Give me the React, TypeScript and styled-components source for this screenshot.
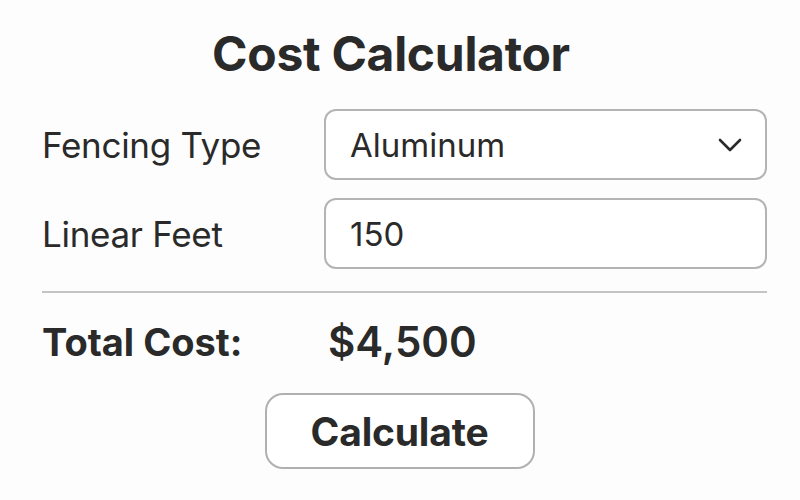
import styled, { createGlobalStyle } from 'styled-components';

const GlobalStyle = createGlobalStyle`
  html, body {
    margin: 0;
    padding: 0;
    background: #fdfdfd;
    font-family: Inter, "Liberation Sans", sans-serif;
    color: #2a2a2a;
  }
`;

const Container = styled.div`
  width: 725px;
  margin-left: 42px;
  padding-top: 26px;
  display: flex;
  flex-direction: column;
`;

const Title = styled.h1`
  margin: 0 0 27px;
  padding-right: 27px;
  text-align: center;
  font-size: 48px;
  font-weight: 700;
  line-height: 56px;
  letter-spacing: -0.3px;
`;

const Row = styled.div`
  display: grid;
  grid-template-columns: 282px 1fr;
  align-items: center;
  margin-bottom: 18px;
`;

const Label = styled.label`
  font-size: 35px;
  font-weight: 400;
  letter-spacing: -0.3px;
`;

const Field = styled.div`
  height: 71px;
  box-sizing: border-box;
  border: 2px solid #b4b4b4;
  border-radius: 12px;
  background: #fff;
  display: flex;
  align-items: center;
  padding: 0 24px;
  font-size: 33px;
`;

const Chevron = styled.svg`
  margin-left: auto;
  margin-right: -2px;
  width: 26px;
  height: 16px;
`;

const Divider = styled.hr`
  margin: 4px 0 0;
  border: none;
  border-top: 2px solid #c4c4c4;
`;

const TotalRow = styled.div`
  display: grid;
  grid-template-columns: 286px 1fr;
  align-items: center;
  margin-top: 23px;
  font-size: 38px;
  font-weight: 700;
`;

const Amount = styled.span`
  font-size: 42px;
  font-weight: 600;
`;

const Button = styled.button`
  align-self: center;
  margin: 26px 10px 0 0;
  width: 270px;
  height: 76px;
  box-sizing: border-box;
  border: 2px solid #b0b0b0;
  border-radius: 18px;
  background: #fff;
  font-family: inherit;
  color: #2a2a2a;
  font-size: 39px;
  font-weight: 700;
  letter-spacing: -0.2px;
  cursor: pointer;
`;

export default function App() {
  return (
    <>
      <GlobalStyle />
      <Container>
        <Title>Cost Calculator</Title>
        <Row>
          <Label>Fencing Type</Label>
          <Field>
            Aluminum
            <Chevron viewBox="0 0 26 16" fill="none" stroke="#2a2a2a" strokeWidth="2.6" strokeLinecap="round" strokeLinejoin="round">
              <path d="M3 3l10 10 10-10" />
            </Chevron>
          </Field>
        </Row>
        <Row>
          <Label>Linear Feet</Label>
          <Field>150</Field>
        </Row>
        <Divider />
        <TotalRow>
          <span>Total Cost:</span>
          <Amount>$4,500</Amount>
        </TotalRow>
        <Button>Calculate</Button>
      </Container>
    </>
  );
}
